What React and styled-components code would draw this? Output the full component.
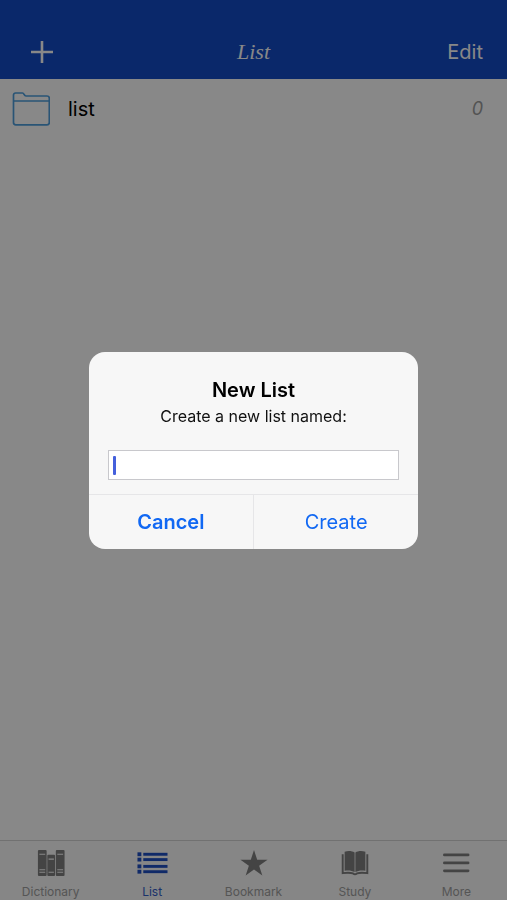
import React, { useState } from 'react';
import styled, { createGlobalStyle } from 'styled-components';

const GlobalStyle = createGlobalStyle`
  * {
    box-sizing: border-box;
  }
  body {
    margin: 0;
    font-family: Inter, "Liberation Sans", sans-serif;
  }
  button, input {
    font-family: inherit;
  }
`;
const Page = styled.div`
  display: flex;
  flex-direction: column;
  min-height: 100vh;
  background: #fff;
`;
const Header = styled.header`
  display: grid;
  grid-template-columns: 1fr auto 1fr;
  align-items: center;
  padding: 24px 24px 0;
  height: 79px;
  background: #134bc7;
`;
const HeaderButton = styled.button`
  justify-self: ${({ $end }) => ($end ? 'end' : 'start')};
  display: flex;
  padding: 0 ${({ $end }) => ($end ? '0' : '6px')};
  border: 0;
  background: none;
  color: #fff;
  font-size: 20px;
  line-height: 24px;
`;
const Title = styled.h1`
  margin: 0;
  color: #fff;
  font-family: "Liberation Serif", serif;
  font-size: 22px;
  font-style: italic;
  font-weight: 400;
  line-height: 26px;
`;
const Lists = styled.ul`
  flex: 1;
  margin: 0;
  padding: 0;
  list-style: none;
`;
const ListRow = styled.li`
  display: flex;
  align-items: center;
  gap: 18px;
  height: 60px;
  padding: 0 24px 0 12px;
`;
const ListName = styled.span`
  flex: 1;
  color: #000;
  font-size: 20px;
  line-height: 24px;
`;
const ListCount = styled.span`
  color: #9c9c9c;
  font-size: 18px;
  font-style: italic;
  line-height: 24px;
`;
const TabBar = styled.nav`
  display: flex;
  height: 60px;
  border-top: 1px solid #d4d4d4;
  background: #fbfbfb;
`;
const Tab = styled.a`
  flex: 1;
  display: flex;
  flex-direction: column;
  align-items: center;
  gap: 6px;
  padding-top: 6px;
  color: ${({ $active }) => ($active ? '#345fc8' : '#a0a0a0')};
  font-size: 12px;
  line-height: 16px;
  text-decoration: none;
  svg {
    color: ${({ $active }) => ($active ? '#1f4fc4' : '#808080')};
  }
`;
const Backdrop = styled.div`
  position: fixed;
  inset: 0;
  display: flex;
  align-items: center;
  justify-content: center;
  background: rgba(0, 0, 0, 0.467);
`;
const Dialog = styled.form`
  width: 65%;
  max-width: 400px;
  border-radius: 16px;
  background: #f7f7f7;
  overflow: hidden;
`;
const DialogBody = styled.div`
  display: flex;
  flex-direction: column;
  align-items: center;
  padding: 24px 19px 14px;
`;
const DialogTitle = styled.h2`
  margin: 0;
  font-size: 20px;
  font-weight: 600;
  line-height: 28px;
`;
const DialogLabel = styled.label`
  color: #111;
  font-size: 16px;
  line-height: 24px;
`;
const Field = styled.div`
  position: relative;
  width: 100%;
  margin-top: 22px;
`;
const Input = styled.input`
  display: block;
  width: 100%;
  height: 30px;
  padding: 0 6px;
  border: 1px solid #c8c8cc;
  border-radius: 0;
  outline: 0;
  background: #fff;
  font-size: 16px;
`;
const Caret = styled.span`
  position: absolute;
  top: 6px;
  left: 5px;
  width: 3px;
  height: 19px;
  border-radius: 1px;
  background: #4560dc;
`;
const Actions = styled.div`
  display: flex;
  border-top: 1px solid #e6e6e8;
`;
const Action = styled.button`
  flex: 1;
  height: 54px;
  padding: 0;
  border: 0;
  background: none;
  color: #1168f3;
  font-size: 20px;
  font-weight: ${({ $bold }) => ($bold ? 600 : 400)};
  & + & {
    border-left: 1px solid #e6e6e8;
  }
`;

const PlusIcon = () => (
  <svg width="24" height="24" viewBox="0 0 24 24" stroke="currentColor" strokeWidth="2.6">
    <path d="M12 1v22M1 12h22" />
  </svg>
);
const FolderIcon = () => (
  <svg width="38" height="34" viewBox="0 0 38 34" fill="none" stroke="#4e9edc" strokeWidth="1.7">
    <path d="M1.5 3a2 2 0 0 1 2-2h7c1.800 0 1.300 3 3.500 3h21a2.300 2.300 0 0 1 2.300 2.300v24.200a2.300 2.300 0 0 1-2.300 2.300H3.800a2.300 2.300 0 0 1-2.300-2.300zM1.500 9h35.800" />
  </svg>
);
const BooksIcon = () => (
  <svg width="34" height="32" viewBox="0 0 34 32">
    <g fill="currentColor">
      <rect x="3.500" y="3" width="9" height="27" rx="1" />
      <rect x="13.200" y="8" width="8" height="22" rx="1" />
      <rect x="22" y="3" width="9" height="27" rx="1" />
    </g>
    <path d="M5 7.500h6M5 23.500h6M5 26h6M14.500 12.500h5.500M14.500 26h5.500M23.500 7.500h6M23.500 23.500h6M23.500 26h6" stroke="#fbfbfb" strokeWidth="1.100" />
  </svg>
);
const ListIcon = () => (
  <svg width="34" height="32" viewBox="0 0 34 32" fill="currentColor">
    {[5.500, 11, 18, 23.500].map((y) => (
      <g key={y}>
        <rect x="2" y={y} width="4" height="4" />
        <rect x="8" y={y + 0.500} width="25" height="3" />
      </g>
    ))}
  </svg>
);
const StarIcon = () => (
  <svg width="34" height="32" viewBox="0 0 34 32" fill="currentColor">
    <path d="M17 3l3.300 10.200H31l-8.700 6.200L25.600 29.500 17 23.300 8.400 29.500l3.300-10.100L3 13.200h10.700z" />
  </svg>
);
const StudyIcon = () => (
  <svg width="34" height="32" viewBox="0 0 34 32">
    <path d="M6.300 4.800c4-1 7.700-.8 10.300 1v20c-3-1.700-6.300-2-10.300-1.300zM27.700 4.800c-4-1-7.700-.8-10.300 1v20c3-1.700 6.300-2 10.300-1.300z" fill="currentColor" />
    <path d="M4.300 7.500v19.500c4-.6 8-.7 10.700.3 1.200 1 2.800 1 4 0 2.700-1 6.700-.9 10.700-.3V7.500" fill="none" stroke="currentColor" strokeWidth="2" />
  </svg>
);
const MoreIcon = () => (
  <svg width="34" height="32" viewBox="0 0 34 32" stroke="currentColor" strokeWidth="2.800" strokeLinecap="round">
    <path d="M5 8.200h24.500M5 16.400h24.500M5 24.600h24.500" />
  </svg>
);

const tabs = [
  { name: 'Dictionary', Icon: BooksIcon },
  { name: 'List', Icon: ListIcon },
  { name: 'Bookmark', Icon: StarIcon },
  { name: 'Study', Icon: StudyIcon },
  { name: 'More', Icon: MoreIcon },
];
const lists = [{ name: 'list', count: 0 }];

export default () => {
  const [name, setName] = useState('');
  return (
    <>
      <GlobalStyle />
      <Page>
        <Header>
          <HeaderButton type="button" aria-label="Add"><PlusIcon /></HeaderButton>
          <Title>List</Title>
          <HeaderButton type="button" $end>Edit</HeaderButton>
        </Header>
        <Lists>
          {lists.map((item) => (
            <ListRow key={item.name}>
              <FolderIcon />
              <ListName>{item.name}</ListName>
              <ListCount>{item.count}</ListCount>
            </ListRow>
          ))}
        </Lists>
        <TabBar>
          {tabs.map(({ name, Icon }) => (
            <Tab key={name} href={`#${name}`} $active={name === 'List'}>
              <Icon />
              {name}
            </Tab>
          ))}
        </TabBar>
      </Page>
      <Backdrop>
        <Dialog role="dialog" aria-labelledby="dialog-title" onSubmit={(e) => e.preventDefault()}>
          <DialogBody>
            <DialogTitle id="dialog-title">New List</DialogTitle>
            <DialogLabel htmlFor="list-name">Create a new list named:</DialogLabel>
            <Field>
              <Input id="list-name" type="text" value={name} onChange={(e) => setName(e.target.value)} />
              {!name && <Caret />}
            </Field>
          </DialogBody>
          <Actions>
            <Action type="button" $bold>Cancel</Action>
            <Action type="submit">Create</Action>
          </Actions>
        </Dialog>
      </Backdrop>
    </>
  );
}
